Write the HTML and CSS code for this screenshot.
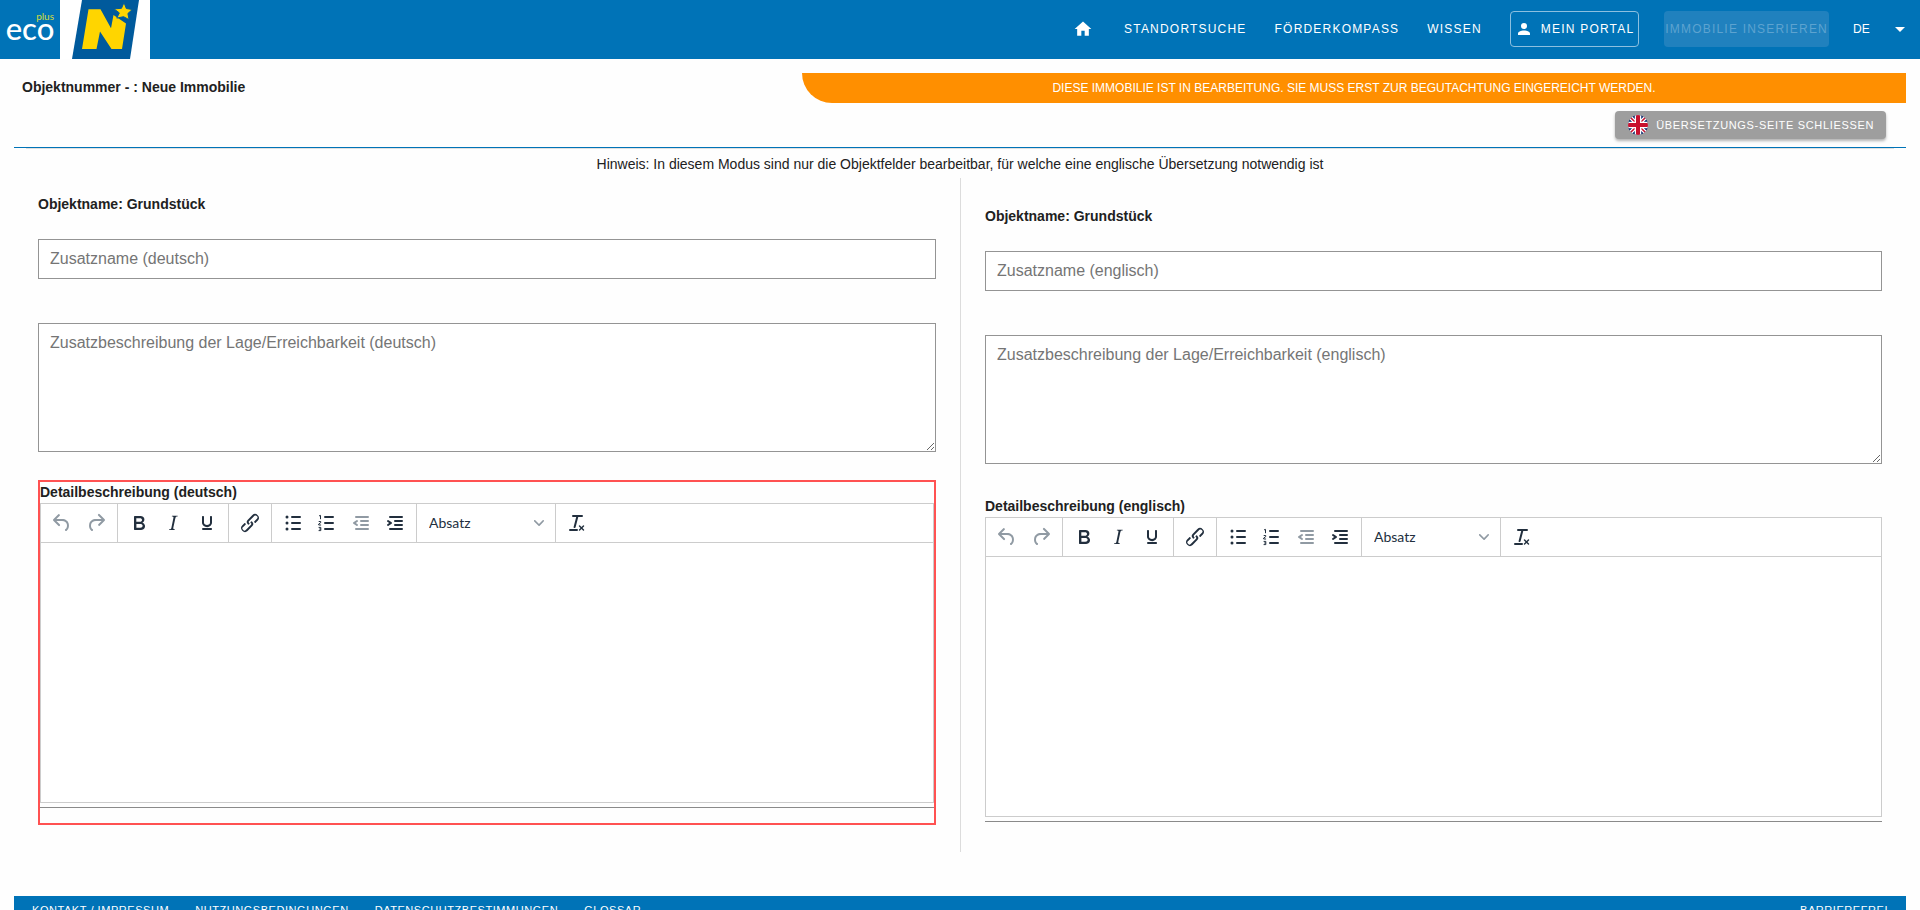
FILE: index.html
```html
<!DOCTYPE html>
<html lang="de">
<head>
<meta charset="utf-8">
<title>ecoplus – Neue Immobilie</title>
<link rel="stylesheet" href="styles.css">
</head>
<body>
<svg class="sprite" aria-hidden="true">
  <symbol id="i-undo" viewBox="0 0 24 24"><path d="M6.4 8H12c3.7 0 6.2 2 6.8 5.1.6 2.7-.4 5.6-2.3 6.8a1 1 0 0 1-1-1.8c1.1-.6 1.8-2.7 1.4-4.6-.5-2.1-2.1-3.5-4.9-3.5H6.4l3.3 3.3a1 1 0 1 1-1.4 1.4l-5-5a1 1 0 0 1 0-1.4l5-5a1 1 0 0 1 1.4 1.4L6.4 8z"/></symbol>
  <symbol id="i-redo" viewBox="0 0 24 24"><path d="M17.6 10H12c-2.8 0-4.4 1.4-4.9 3.5-.4 2 .3 4 1.4 4.6a1 1 0 1 1-1 1.8c-2-1.2-2.9-4.1-2.3-6.8.6-3 3-5.1 6.8-5.1h5.6l-3.3-3.3a1 1 0 1 1 1.4-1.4l5 5a1 1 0 0 1 0 1.4l-5 5a1 1 0 0 1-1.4-1.4l3.3-3.3z"/></symbol>
  <symbol id="i-bold" viewBox="0 0 24 24"><path fill-rule="evenodd" d="M7.8 19c-.3 0-.5 0-.6-.2l-.2-.5V5.7c0-.2 0-.4.2-.5l.6-.2h5c1.5 0 2.7.3 3.5 1 .7.6 1.1 1.4 1.1 2.5a3 3 0 0 1-.6 1.9c-.4.6-1 1-1.6 1.2.4.1.9.3 1.3.6s.8.7 1 1.2c.4.4.5 1 .5 1.6 0 1.3-.4 2.3-1.3 3-.8.7-2.1 1-3.8 1H7.8zm5-8.3c.6 0 1.2-.1 1.6-.5.4-.3.6-.7.6-1.3 0-1.1-.8-1.7-2.3-1.7H9.3v3.5h3.4zm.5 6c.7 0 1.3-.1 1.7-.4.4-.4.6-.9.6-1.5s-.2-1-.7-1.4c-.4-.3-1-.4-2-.4H9.4v3.8h4z"/></symbol>
  <symbol id="i-italic" viewBox="0 0 24 24"><path d="M16.7 4.7l-.1.9h-.3c-.6 0-1 0-1.4.3-.3.3-.4.6-.5 1.1l-2.1 9.8v.6c0 .5.4.8 1.4.8h.2l-.2.8H8l.2-.8h.2c1.1 0 1.8-.5 2-1.5l2-9.8.1-.5c0-.6-.4-.8-1.4-.8h-.3l.2-.9h5.8z"/></symbol>
  <symbol id="i-underline" viewBox="0 0 24 24"><path d="M16 5c.6 0 1 .4 1 1v5.5a4 4 0 0 1-.4 1.8l-1 1.4a5.3 5.3 0 0 1-5.5 1 5 5 0 0 1-1.6-1c-.5-.4-.8-.9-1.1-1.4a4 4 0 0 1-.4-1.8V6c0-.6.4-1 1-1s1 .4 1 1v5.5c0 .3 0 .6.2 1l.6.7a3.3 3.3 0 0 0 2.2.8 3.4 3.4 0 0 0 2.2-.8c.3-.2.4-.5.6-.8l.2-.9V6c0-.6.4-1 1-1zM8 17h8c.6 0 1 .4 1 1s-.4 1-1 1H8a1 1 0 0 1 0-2z"/></symbol>
  <symbol id="i-link" viewBox="0 0 24 24"><path d="M6.2 12.3a1 1 0 0 1 1.4 1.4l-2.1 2a2 2 0 1 0 2.7 2.8l4.8-4.8a1 1 0 0 0 0-1.4 1 1 0 1 1 1.4-1.3 2.9 2.9 0 0 1 0 4L9.6 20a3.9 3.9 0 0 1-5.5-5.5l2-2zm11.6-.6a1 1 0 0 1-1.4-1.4l2-2a2 2 0 1 0-2.6-2.8L11 10.3a1 1 0 0 0 0 1.4A1 1 0 1 1 9.6 13a2.9 2.9 0 0 1 0-4L14.4 4a3.9 3.9 0 0 1 5.5 5.5l-2 2z"/></symbol>
  <symbol id="i-ul" viewBox="0 0 24 24"><path d="M11 5h8a1 1 0 0 1 0 2h-8a1 1 0 0 1 0-2zm0 6h8a1 1 0 0 1 0 2h-8a1 1 0 0 1 0-2zm0 6h8a1 1 0 0 1 0 2h-8a1 1 0 0 1 0-2z"/><circle cx="6" cy="6" r="1.5"/><circle cx="6" cy="12" r="1.5"/><circle cx="6" cy="18" r="1.5"/></symbol>
  <symbol id="i-ol" viewBox="0 0 24 24"><path d="M10 17h8a1 1 0 0 1 0 2h-8a1 1 0 0 1 0-2zm0-6h8a1 1 0 0 1 0 2h-8a1 1 0 0 1 0-2zm0-6h8a1 1 0 0 1 0 2h-8a1 1 0 0 1 0-2z"/><path class="stroke" d="M4 4.9l1.5-.5v3.8M3.7 10.5h2v1.2l-2 1.3v1h2.4M3.6 16.4h2.2v3.2H3.6M4.2 18h1.6"/></symbol>
  <symbol id="i-outdent" viewBox="0 0 24 24"><path d="M7 5h12a1 1 0 0 1 0 2H7a1 1 0 1 1 0-2zm5 4h7a1 1 0 0 1 0 2h-7a1 1 0 0 1 0-2zm0 4h7a1 1 0 0 1 0 2h-7a1 1 0 0 1 0-2zm-5 4h12a1 1 0 0 1 0 2H7a1 1 0 0 1 0-2zm1.6-3.8a1 1 0 0 1-1.2 1.6l-3-2a1 1 0 0 1 0-1.6l3-2a1 1 0 0 1 1.2 1.6L6.8 12l1.8 1.2z"/></symbol>
  <symbol id="i-indent" viewBox="0 0 24 24"><path d="M7 5h12a1 1 0 0 1 0 2H7a1 1 0 1 1 0-2zm5 4h7a1 1 0 0 1 0 2h-7a1 1 0 0 1 0-2zm0 4h7a1 1 0 0 1 0 2h-7a1 1 0 0 1 0-2zm-5 4h12a1 1 0 0 1 0 2H7a1 1 0 0 1 0-2zm-2.6-3.8L6.2 12l-1.8-1.2a1 1 0 0 1 1.2-1.6l3 2a1 1 0 0 1 0 1.6l-3 2a1 1 0 1 1-1.2-1.6z"/></symbol>
  <symbol id="i-clear" viewBox="0 0 24 24"><path d="M13.2 6a1 1 0 0 1 0 .2l-2.6 10a1 1 0 0 1-1 .8h-.2a.8.8 0 0 1-.8-1l2.6-10H8a1 1 0 1 1 0-2h9a1 1 0 0 1 0 2h-3.8zM5 18h7a1 1 0 0 1 0 2H5a1 1 0 0 1 0-2zm13 1.5L16.5 18 15 19.5a.7.7 0 0 1-1-1l1.5-1.5-1.5-1.5a.7.7 0 0 1 1-1l1.5 1.5 1.5-1.5a.7.7 0 0 1 1 1L17.5 17l1.5 1.5a.7.7 0 0 1-1 1z"/></symbol>
  <symbol id="i-chevron" viewBox="0 0 10 10"><path d="M8.7 2.2c.3-.3.8-.3 1 0 .4.4.4.9 0 1.2L5.7 7.8c-.3.3-.9.3-1.2 0L.2 3.4a.8.8 0 0 1 0-1.2c.3-.3.8-.3 1.1 0L5 6l3.7-3.8z"/></symbol>
</svg>

<header class="topbar">
  <a class="logo-eco" href="#" aria-label="ecoplus">
    <svg width="60" height="59" viewBox="0 0 60 59"><text class="logo-plus" x="54" y="20" text-anchor="end">plus</text><text class="logo-word" x="30" y="40" text-anchor="middle">eco</text></svg>
  </a>
  <a class="logo-noe" href="#" aria-label="Niederösterreich">
    <svg width="90" height="59" viewBox="0 0 90 59"><path fill="#005a9c" d="M22 0h57L70 59H12z"/><path fill="#ffd500" d="M28.5 9.300H40.500L51 28.300 53.500 15 66 23.500 62 49H51.500L40 31.500 36.500 49H22z"/><path fill="#ffd500" stroke="#005a9c" stroke-width="1" d="M64 2.500l2.300 6 6 1-4.400 4 1.200 6.200-5.500-3-6.800 1.400 2.500-5.200-5.200-4 7.400-.6z"/></svg>
  </a>
  <nav class="nav">
    <a class="nav-home" href="#" aria-label="Startseite"><svg width="20" height="20" viewBox="0 0 24 24"><path d="M10 20v-6h4v6h5v-8h3L12 3 2 12h3v8z"/></svg></a>
    <a class="nav-link" href="#">STANDORTSUCHE</a>
    <a class="nav-link" href="#">FÖRDERKOMPASS</a>
    <a class="nav-link" href="#">WISSEN</a>
    <button class="nav-btn nav-portal" type="button"><svg width="18" height="18" viewBox="0 0 24 24"><path d="M12 4a4 4 0 1 1 0 8 4 4 0 0 1 0-8zm0 10c4.400 0 8 1.800 8 4v2H4v-2c0-2.200 3.600-4 8-4z"/></svg>MEIN PORTAL</button>
    <button class="nav-btn nav-insert" type="button" disabled>IMMOBILIE INSERIEREN</button>
    <span class="lang">
      <select class="lang-select" aria-label="Sprache"><option>DE</option><option>EN</option></select>
      <svg class="lang-arrow" width="10" height="5" viewBox="0 0 10 5"><path d="M0 0h10L5 5z"/></svg>
    </span>
  </nav>
</header>

<main class="page">
  <div class="status-row">
    <h1 class="title">Objektnummer - : Neue Immobilie</h1>
    <p class="banner">DIESE IMMOBILIE IST IN BEARBEITUNG. SIE MUSS ERST ZUR BEGUTACHTUNG EINGEREICHT WERDEN.</p>
  </div>
  <div class="action-row">
    <button class="close-btn" type="button">
      <svg width="20" height="20" viewBox="0 0 20 20"><defs><clipPath id="disc"><circle cx="10" cy="10" r="10"/></clipPath></defs><g clip-path="url(#disc)"><path fill="#012169" d="M0 0h20v20H0z"/><path stroke="#fff" stroke-width="4" d="M0 0l20 20M20 0L0 20"/><path stroke="#c8102e" stroke-width="1.500" d="M0 0l20 20M20 0L0 20"/><path stroke="#fff" stroke-width="6.500" d="M10 0v20M0 10h20"/><path stroke="#c8102e" stroke-width="4" d="M10 0v20M0 10h20"/></g></svg>
      ÜBERSETZUNGS-SEITE SCHLIESSEN
    </button>
  </div>
  <div class="rule"></div>
  <p class="hint">Hinweis: In diesem Modus sind nur die Objektfelder bearbeitbar, für welche eine englische Übersetzung notwendig ist</p>

  <div class="columns">
    <section class="col col-de">
      <h2 class="col-title">Objektname: Grundstück</h2>
      <input class="field" type="text" placeholder="Zusatzname (deutsch)" aria-label="Zusatzname (deutsch)">
      <textarea class="field field-area" placeholder="Zusatzbeschreibung der Lage/Erreichbarkeit (deutsch)" aria-label="Zusatzbeschreibung der Lage/Erreichbarkeit (deutsch)"></textarea>
      <div class="detail detail-active">
        <h3 class="detail-label" id="label-de">Detailbeschreibung (deutsch)</h3>
        <div class="editor">
          <div class="toolbar" role="toolbar" aria-label="Formatierung">
            <div class="group">
              <button class="tool" type="button" disabled aria-label="Rückgängig"><svg><use href="#i-undo"/></svg></button>
              <button class="tool" type="button" disabled aria-label="Wiederholen"><svg><use href="#i-redo"/></svg></button>
            </div>
            <div class="group">
              <button class="tool" type="button" aria-label="Fett"><svg><use href="#i-bold"/></svg></button>
              <button class="tool" type="button" aria-label="Kursiv"><svg><use href="#i-italic"/></svg></button>
              <button class="tool" type="button" aria-label="Unterstrichen"><svg><use href="#i-underline"/></svg></button>
            </div>
            <div class="group">
              <button class="tool" type="button" aria-label="Link"><svg><use href="#i-link"/></svg></button>
            </div>
            <div class="group">
              <button class="tool" type="button" aria-label="Aufzählung"><svg><use href="#i-ul"/></svg></button>
              <button class="tool" type="button" aria-label="Nummerierte Liste"><svg><use href="#i-ol"/></svg></button>
              <button class="tool" type="button" disabled aria-label="Einzug verkleinern"><svg><use href="#i-outdent"/></svg></button>
              <button class="tool" type="button" aria-label="Einzug vergrößern"><svg><use href="#i-indent"/></svg></button>
            </div>
            <div class="group">
              <span class="format">
                <select class="format-select" aria-label="Absatzformat"><option>Absatz</option></select>
                <svg class="format-arrow"><use href="#i-chevron"/></svg>
              </span>
            </div>
            <div class="group">
              <button class="tool" type="button" aria-label="Formatierung entfernen"><svg><use href="#i-clear"/></svg></button>
            </div>
          </div>
          <div class="edit-area" contenteditable="true" role="textbox" aria-multiline="true" aria-labelledby="label-de"></div>
        </div>
        <div class="underline"></div>
      </div>
    </section>

    <section class="col col-en">
      <h2 class="col-title">Objektname: Grundstück</h2>
      <input class="field" type="text" placeholder="Zusatzname (englisch)" aria-label="Zusatzname (englisch)">
      <textarea class="field field-area" placeholder="Zusatzbeschreibung der Lage/Erreichbarkeit (englisch)" aria-label="Zusatzbeschreibung der Lage/Erreichbarkeit (englisch)"></textarea>
      <div class="detail">
        <h3 class="detail-label" id="label-en">Detailbeschreibung (englisch)</h3>
        <div class="editor">
          <div class="toolbar" role="toolbar" aria-label="Formatierung">
            <div class="group">
              <button class="tool" type="button" disabled aria-label="Rückgängig"><svg><use href="#i-undo"/></svg></button>
              <button class="tool" type="button" disabled aria-label="Wiederholen"><svg><use href="#i-redo"/></svg></button>
            </div>
            <div class="group">
              <button class="tool" type="button" aria-label="Fett"><svg><use href="#i-bold"/></svg></button>
              <button class="tool" type="button" aria-label="Kursiv"><svg><use href="#i-italic"/></svg></button>
              <button class="tool" type="button" aria-label="Unterstrichen"><svg><use href="#i-underline"/></svg></button>
            </div>
            <div class="group">
              <button class="tool" type="button" aria-label="Link"><svg><use href="#i-link"/></svg></button>
            </div>
            <div class="group">
              <button class="tool" type="button" aria-label="Aufzählung"><svg><use href="#i-ul"/></svg></button>
              <button class="tool" type="button" aria-label="Nummerierte Liste"><svg><use href="#i-ol"/></svg></button>
              <button class="tool" type="button" disabled aria-label="Einzug verkleinern"><svg><use href="#i-outdent"/></svg></button>
              <button class="tool" type="button" aria-label="Einzug vergrößern"><svg><use href="#i-indent"/></svg></button>
            </div>
            <div class="group">
              <span class="format">
                <select class="format-select" aria-label="Absatzformat"><option>Absatz</option></select>
                <svg class="format-arrow"><use href="#i-chevron"/></svg>
              </span>
            </div>
            <div class="group">
              <button class="tool" type="button" aria-label="Formatierung entfernen"><svg><use href="#i-clear"/></svg></button>
            </div>
          </div>
          <div class="edit-area" contenteditable="true" role="textbox" aria-multiline="true" aria-labelledby="label-en"></div>
        </div>
        <div class="underline"></div>
      </div>
    </section>
  </div>

  <footer class="footer">
    <a href="#">KONTAKT / IMPRESSUM</a>
    <a href="#">NUTZUNGSBEDINGUNGEN</a>
    <a href="#">DATENSCHUTZBESTIMMUNGEN</a>
    <a href="#">GLOSSAR</a>
    <a class="footer-end" href="#">BARRIEREFREI</a>
  </footer>
</main>
</body>
</html>
```
FILE: styles.css
```css
* { box-sizing: border-box; }
html { overflow: hidden; }
body {
  margin: 0;
  height: 100vh;
  overflow: hidden;
  background: #fefefe;
  color: #212121;
  font-family: "Liberation Sans", Arial, sans-serif;
  font-size: 14px;
  line-height: 20px;
}
h1, h2, h3, p { margin: 0; font-size: 14px; }
a { color: inherit; text-decoration: none; }
button, select, input, textarea { font-family: inherit; margin: 0; }
svg { display: block; fill: currentColor; }
.sprite { display: none; }
.stroke { fill: none; stroke: currentColor; stroke-width: 1; }

/* Header */
.topbar {
  display: flex;
  align-items: center;
  height: 59px;
  background: #0073b7;
  color: #fff;
}
.logo-noe { background: #fff; }
.logo-word { font-family: Lato, sans-serif; font-size: 31px; font-weight: 500; fill: #fff; }
.logo-plus { font-family: Lato, sans-serif; font-size: 10px; fill: #d3dc3c; }
.nav {
  display: flex;
  align-items: center;
  margin-left: auto;
  padding: 0 15px 1px 0;
  font-size: 12px;
  letter-spacing: 0.1em;
}
.nav-home { margin-right: 31px; }
.nav-link { margin-right: 28px; }
.nav-btn {
  display: flex;
  align-items: center;
  justify-content: center;
  height: 36px;
  border-radius: 4px;
  color: #fff;
  font-size: 12px;
  letter-spacing: 0.1em;
  white-space: nowrap;
}
.nav-portal {
  gap: 8px;
  padding: 0 4px 1px;
  border: 1px solid #8cc0e0;
  background: none;
}
.nav-insert {
  margin-left: 25px;
  padding: 0 1px 1px;
  border: 0;
  background: #2081be;
  color: #5da3d0;
}
.lang {
  display: flex;
  align-items: center;
  gap: 25px;
  margin-left: 24px;
}
.lang-select {
  appearance: none;
  border: 0;
  padding: 0;
  background: none;
  color: #fff;
  font-size: 12px;
}

/* Page head */
.page { padding: 14px 14px 0; }
.status-row { display: flex; align-items: center; }
.title { flex: 1; padding: 0 0 2px 8px; }
.banner {
  width: 1104px;
  max-width: 60%;
  padding: 5px 0;
  border-bottom-left-radius: 30px;
  background: #ff8f00;
  color: #fff;
  font-size: 12px;
  text-align: center;
}
.action-row {
  display: flex;
  justify-content: flex-end;
  padding: 8px 20px;
}
.close-btn {
  display: flex;
  align-items: center;
  gap: 8px;
  height: 28px;
  padding: 0 12px 0 13px;
  border: 0;
  border-radius: 4px;
  background: #9e9e9e;
  color: #fff;
  font-size: 11px;
  letter-spacing: 0.06em;
  box-shadow: 0 2px 3px rgba(0, 0, 0, 0.3);
}
.rule {
  height: 2px;
  border-top: 1px solid #0073b7;
  background: #e0e0e0 content-box;
  padding: 0 12px;
}
.hint { padding: 5px 0 4px; text-align: center; }

/* Two language columns */
.columns { display: grid; grid-template-columns: 1fr 1fr; }
.col { display: flex; flex-direction: column; padding: 16px 24px 27px; }
.col-en { padding-top: 28px; border-left: 1px solid #dcdcdc; }
.col-title { margin-bottom: 25px; }
.field {
  width: 100%;
  height: 40px;
  padding: 9px 11px;
  border: 1px solid #949494;
  border-radius: 0;
  background: #fff;
  color: #212121;
  font-size: 16px;
}
.field::placeholder { color: #757575; }
.field-area { display: block; height: 129px; margin: 44px 0 32px; padding-top: 10px; resize: vertical; }
.col-de .field-area { margin-bottom: 28px; }
.detail-active { padding-bottom: 15px; border: 2px solid #ff5252; }
.detail-label { line-height: 21px; }
.editor {
  display: flex;
  flex-direction: column;
  height: 300px;
  border: 1px solid #ccc;
  background: #fff;
}
.toolbar { display: flex; height: 39px; border-bottom: 1px solid #ccc; }
.group {
  display: flex;
  align-items: center;
  padding: 0 4px;
  border-right: 1px solid #ccc;
}
.group:last-child { border-right: 0; }
.tool {
  display: grid;
  place-items: center;
  width: 34px;
  height: 34px;
  padding: 0;
  border: 0;
  background: none;
  color: #222f3e;
}
.tool:disabled { color: #909aa3; }
.tool svg { width: 24px; height: 24px; }
.format { display: grid; align-items: center; width: 130px; }
.format-select {
  grid-area: 1 / 1;
  appearance: none;
  height: 34px;
  padding: 0 8px 2px;
  border: 0;
  background: none;
  color: #222f3e;
  font-family: Lato, sans-serif;
  font-size: 14px;
}
.format-arrow {
  grid-area: 1 / 1;
  justify-self: end;
  width: 10px;
  height: 10px;
  margin-right: 7px;
  color: #909aa3;
  pointer-events: none;
}
.edit-area { flex: 1; outline: 0; }
.underline { margin-top: 4px; border-top: 1px solid #8a8a8a; }

/* Footer */
.footer {
  display: flex;
  gap: 26px;
  margin-top: 44px;
  padding: 4px 18px;
  background: #0073b7;
  color: #fff;
  font-size: 11px;
  letter-spacing: 0.05em;
}
.footer-end { margin-left: auto; }
```
